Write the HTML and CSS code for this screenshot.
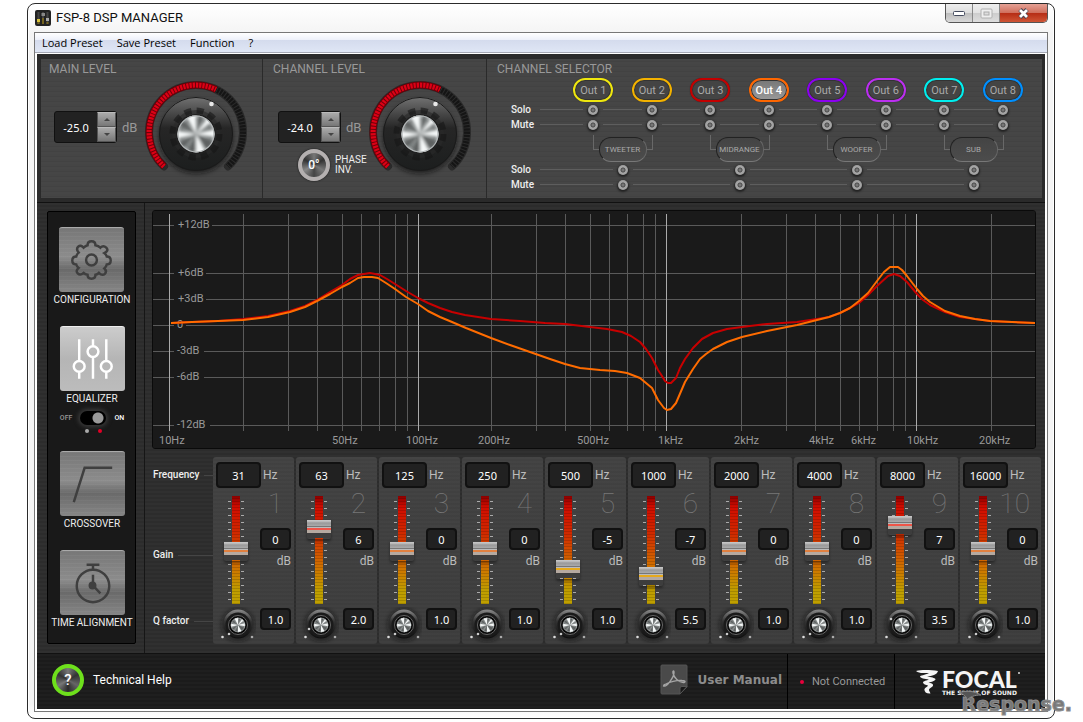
FILE: index.html
```
<!DOCTYPE html>
<html lang="en">
<head>
<meta charset="utf-8">
<meta name="viewport" content="width=device-width, initial-scale=1">
<title>FSP-8 DSP MANAGER</title>
<link rel="stylesheet" href="styles.css">
</head>
<body>
<svg class="defs" width="0" height="0" aria-hidden="true">
  <defs>
    <radialGradient id="capBase"><stop offset="0" stop-color="#9b9f9f"/><stop offset=".8" stop-color="#7e8282"/><stop offset="1" stop-color="#a4a8a9"/></radialGradient>
    <linearGradient id="bodyShade" x1="0" y1="0" x2="0" y2="1"><stop offset="0" stop-color="#727272"/><stop offset=".2" stop-color="#4c4c4c"/><stop offset=".42" stop-color="#262626"/><stop offset="1" stop-color="#1c1e1e"/></linearGradient>
    <linearGradient id="rimShade" x1="0" y1="0" x2="0" y2="1"><stop offset="0" stop-color="#8a8a8a"/><stop offset=".4" stop-color="#333"/><stop offset="1" stop-color="#0e0e0e"/></linearGradient>
    <filter id="soft" x="-30%" y="-30%" width="160%" height="160%"><feGaussianBlur stdDeviation="2"/></filter>
    <filter id="softCap" x="-30%" y="-30%" width="160%" height="160%"><feGaussianBlur stdDeviation=".8"/></filter>
    <clipPath id="capClip"><circle r="10"/></clipPath>
    <g id="cap">
      <circle r="10" fill="url(#capBase)"/>
      <g clip-path="url(#capClip)">
        <g filter="url(#softCap)">
          <path d="M0 0 0-12-6-11ZM0 0 0 12 6 11ZM0 0 12-3 12 2ZM0 0-12 3-12-2ZM0 0 7-10 9-7Z" fill="#f4f7f7"/>
          <path d="M0 0 11 5 7 10ZM0 0-11-6-9-9ZM0 0-5 11-1 11ZM0 0 2-11 4-11ZM0 0-9 9-11 6Z" fill="#4e5253" opacity=".7"/>
        </g>
      </g>
      <circle r="9.700" fill="none" stroke="#b2b6b7" stroke-width=".6"/>
    </g>
    <g id="bigKnob">
      <path d="M-32 34.400A47 47 0 1 1 32 34.400" fill="none" stroke="#2b2b2b" stroke-width="8" stroke-linecap="round"/>
      <path d="M-32 34.400A47 47 0 1 1 32 34.400" fill="none" stroke="#151515" stroke-width="6" stroke-dasharray="2.200 1"/>
      <path d="M-32 34.400A47 47 0 0 1 20-42.500" fill="none" stroke="#6d0009" stroke-width="7" />
      <path d="M-32 34.400A47 47 0 0 1 20-42.500" fill="none" stroke="#dc0015" stroke-width="5" stroke-dasharray="2.200 1"/>
      <circle cy="5" r="37" fill="#111" opacity=".6" filter="url(#soft)"/>
      <circle cy="2" r="37" fill="url(#bodyShade)"/>
      <circle cy="2" r="36.500" fill="none" stroke="#1a1a1a"/>
      <circle cy="2" r="24" fill="#2a2a2a" opacity=".6"/>
      <circle cy="2" r="23.500" fill="none" stroke="#161616" stroke-width="6" stroke-dasharray="7 5.300" opacity=".6"/>
      <circle cy="2" r="20" fill="#202020"/>
      <use href="#cap" transform="translate(0 2) scale(1.850)"/>
      <circle cx="15.500" cy="-28" r="2.300" fill="#e9e9e9"/>
    </g>
    <g id="smallKnob">
      <circle r="17" fill="#111" opacity=".45" filter="url(#soft)"/>
      <circle cy="-1" r="14.500" fill="url(#rimShade)"/>
      <circle r="12.500" fill="#1a1a1a"/>
      <circle r="9.500" fill="#080808" stroke="#666" stroke-width="1"/>
      <use href="#cap" transform="scale(.720)"/>
      <circle cx="-15.500" cy="12" r="1.300" fill="#ddd"/><circle cx="14" cy="12" r="1.300" fill="#aaa"/>
    </g>
  </defs>
</svg>

<div class="window">
  <header class="titlebar">
    <svg class="app-icon" viewBox="0 0 16 16" aria-hidden="true"><rect width="16" height="16" rx="2" fill="#222"/><path d="M3.500 2v12M8 2v12M12.500 2v12" stroke="#444" stroke-width="2"/><path d="M3.500 10v4M8 8v6M12.500 12v2" stroke="#75631f" stroke-width="2"/><rect x="2" y="9" width="3" height="3" fill="#d8c23c"/><rect x="6.500" y="3" width="3.500" height="3" fill="#888"/><rect x="11" y="8" width="3" height="3" fill="#aaa"/></svg>
    <h1 class="app-title">FSP-8 DSP MANAGER</h1>
    <div class="win-buttons">
      <button class="win-btn" aria-label="Minimize"><svg width="14" height="8" viewBox="0 0 14 8"><rect x="1.500" y="2.500" width="11" height="4" rx="1" fill="#fff" stroke="#444b5e"/></svg></button>
      <button class="win-btn" aria-label="Maximize"><svg width="13" height="11" viewBox="0 0 13 11"><rect x="1" y="1" width="11" height="9" rx="1" fill="#eee" stroke="#b0b0b0"/><rect x="4" y="4" width="5" height="3" fill="#ddd" stroke="#aaa"/></svg></button>
      <button class="win-btn win-close" aria-label="Close"><svg width="13" height="11" viewBox="0 0 13 11"><path d="M3 1.500 10 9.500M10 1.500 3 9.500" stroke="#4b4552" stroke-width="4.500"/><path d="M3 2 10 9M10 2 3 9" stroke="#fff" stroke-width="2.800"/></svg></button>
    </div>
  </header>

  <div class="frame">
    <nav class="menu">
      <button>Load Preset</button><button>Save Preset</button><button>Function</button><button>?</button>
    </nav>

    <main class="console">
      <div class="top">
        <section class="panel level">
          <h2 class="panel-title">MAIN LEVEL</h2>
          <div class="level-row">
            <div class="level-left">
              <div class="spin-row">
                <div class="spinner"><input type="text" value="-25.0" aria-label="Main level"><button aria-label="Increase main level"><i class="tri up"></i></button><button aria-label="Decrease main level"><i class="tri down"></i></button></div>
                <span>dB</span>
              </div>
            </div>
            <svg class="knob" viewBox="-52 -52 104 104" role="img" aria-label="Main level knob"><use href="#bigKnob"/></svg>
          </div>
        </section>

        <section class="panel level channel">
          <h2 class="panel-title">CHANNEL LEVEL</h2>
          <div class="level-row">
            <div class="level-left">
              <div class="spin-row">
                <div class="spinner"><input type="text" value="-24.0" aria-label="Channel level"><button aria-label="Increase channel level"><i class="tri up"></i></button><button aria-label="Decrease channel level"><i class="tri down"></i></button></div>
                <span>dB</span>
              </div>
              <div class="phase"><button class="round" id="phase">0°</button><label for="phase">PHASE<br>INV.</label></div>
            </div>
            <svg class="knob" viewBox="-52 -52 104 104" role="img" aria-label="Channel level knob"><use href="#bigKnob"/></svg>
          </div>
        </section>

        <section class="panel selector">
          <h2 class="panel-title">CHANNEL SELECTOR</h2>
          <div class="matrix">
            <div class="outs">
              <button class="out c1">Out 1</button><button class="out c2">Out 2</button><button class="out c3">Out 3</button><button class="out c4 active">Out 4</button><button class="out c5">Out 5</button><button class="out c6">Out 6</button><button class="out c7">Out 7</button><button class="out c8">Out 8</button>
            </div>
            <div class="switches"><span class="lead">Solo</span><div class="cells">
              <span class="cell"><input type="checkbox" aria-label="Solo Out 1"></span><span class="cell"><input type="checkbox" aria-label="Solo Out 2"></span><span class="cell"><input type="checkbox" aria-label="Solo Out 3"></span><span class="cell"><input type="checkbox" aria-label="Solo Out 4"></span><span class="cell"><input type="checkbox" aria-label="Solo Out 5"></span><span class="cell"><input type="checkbox" aria-label="Solo Out 6"></span><span class="cell"><input type="checkbox" aria-label="Solo Out 7"></span><span class="cell"><input type="checkbox" aria-label="Solo Out 8"></span>
            </div></div>
            <div class="switches"><span class="lead">Mute</span><div class="cells">
              <span class="cell"><input type="checkbox" aria-label="Mute Out 1"></span><span class="cell"><input type="checkbox" aria-label="Mute Out 2"></span><span class="cell"><input type="checkbox" aria-label="Mute Out 3"></span><span class="cell"><input type="checkbox" aria-label="Mute Out 4"></span><span class="cell"><input type="checkbox" aria-label="Mute Out 5"></span><span class="cell"><input type="checkbox" aria-label="Mute Out 6"></span><span class="cell"><input type="checkbox" aria-label="Mute Out 7"></span><span class="cell"><input type="checkbox" aria-label="Mute Out 8"></span>
            </div></div>
            <div class="groups">
              <div class="group"><button>TWEETER</button></div><div class="group"><button>MIDRANGE</button></div><div class="group"><button>WOOFER</button></div><div class="group"><button>SUB</button></div>
            </div>
            <div class="switches"><span class="lead">Solo</span><div class="cells four">
              <span class="cell"><input type="checkbox" aria-label="Solo tweeter"></span><span class="cell"><input type="checkbox" aria-label="Solo midrange"></span><span class="cell"><input type="checkbox" aria-label="Solo woofer"></span><span class="cell"><input type="checkbox" aria-label="Solo sub"></span>
            </div></div>
            <div class="switches"><span class="lead">Mute</span><div class="cells four">
              <span class="cell"><input type="checkbox" aria-label="Mute tweeter"></span><span class="cell"><input type="checkbox" aria-label="Mute midrange"></span><span class="cell"><input type="checkbox" aria-label="Mute woofer"></span><span class="cell"><input type="checkbox" aria-label="Mute sub"></span>
            </div></div>
          </div>
        </section>
      </div>

      <div class="middle">
        <aside class="side">
          <nav class="modes">
            <div class="mode"><button class="tile" aria-labelledby="m1"><svg viewBox="0 0 66 66"><path d="M29 17.500 Q29 13.500 33 13.500 T37 17.500 Q40 18 42 20 Q45 17 48 20 T46 25.500 Q48 27 48.500 29 Q52.500 29 52.500 33 T48.500 37 Q48 39.500 46 41 Q49 44 46.500 46.500 T40.500 45.500 Q39 47 37 47.500 Q37 51.500 33 51.500 T29 47.500 Q26.500 47 25 45.500 Q21.500 48.500 19 46 T20 40.500 Q18 39 17.500 37 Q13.500 37 13.500 33 T17.500 29 Q18 26.500 20 25 Q17 21.500 19.500 19 T25 20 Q27 18 29 17.500Z"/><circle cx="33" cy="32.500" r="5.500"/></svg></button><span id="m1">CONFIGURATION</span></div>
            <div class="mode"><button class="tile on" aria-labelledby="m2"><svg viewBox="0 0 66 66"><path d="M19.500 12.500v22M19.500 46v6.500M33.500 12.500v7M33.500 31v21.500M47 12.500v22M47 46v6.500"/><circle cx="19.500" cy="40" r="5.500"/><circle cx="33.500" cy="25" r="5.500"/><circle cx="47" cy="40" r="5.500"/></svg></button><span id="m2">EQUALIZER</span>
              <label class="toggle"><span class="off">OFF</span><span class="track"><input type="checkbox" checked aria-label="Equalizer on"><span class="leds"><i></i><i class="red"></i></span></span><span class="lit">ON</span></label></div>
            <div class="mode"><button class="tile" aria-labelledby="m3"><svg viewBox="0 0 66 66"><path d="M14 51 25 16H53"/></svg></button><span id="m3">CROSSOVER</span></div>
            <div class="mode"><button class="tile" aria-labelledby="m4"><svg viewBox="0 0 66 66"><circle cx="33.500" cy="35.500" r="16.500"/><path d="M27 14h13M33.500 14v5M33.500 24v11L41 43"/><circle class="dot" cx="33" cy="35" r="4"/></svg></button><span id="m4">TIME ALIGNMENT</span></div>
          </nav>
        </aside>

        <div class="work">
          <svg class="graph" viewBox="153 211 882 237" role="img" aria-label="Equalizer response">
            <path class="grid" d="M153 225.500H1035M153 273.500H1035M153 299.500H1035M153 325.500H1035M153 351.500H1035M153 377.500H1035M153 425.500H1035M243.500 214V431M288.500 214V431M317.500 214V431M342.500 214V431M361.500 214V431M379.500 214V431M395.500 214V431M407.500 214V431M491.500 214V431M536.500 214V431M565.500 214V431M590.500 214V431M609.500 214V431M627.500 214V431M643.500 214V431M655.500 214V431M741.500 214V431M786.500 214V431M815.500 214V431M840.500 214V431M859.500 214V431M877.500 214V431M893.500 214V431M905.500 214V431M991.500 214V431"/>
            <g class="mask"><path d="M174 220h38v10h-38zM174 268h32v10h-32zM174 294h32v10h-32zM174 320h12v10h-12zM174 346h30v10h-30zM174 372h30v10h-30zM174 420h36v10h-36z"/></g>
            <path class="decade" d="M169.500 214V431M418.500 214V431M666.500 214V431M916.500 214V431"/>
            <g class="scale">
              <text x="178" y="228">+12dB</text><text x="178" y="276">+6dB</text><text x="178" y="302">+3dB</text><text x="177" y="328">0</text><text x="177" y="354">-3dB</text><text x="177" y="380">-6dB</text><text x="177" y="428">-12dB</text>
              <text x="159" y="444">10Hz</text><text x="332" y="444">50Hz</text><text x="406" y="444">100Hz</text><text x="478" y="444">200Hz</text><text x="577" y="444">500Hz</text><text x="658" y="444">1kHz</text><text x="734" y="444">2kHz</text><text x="809" y="444">4kHz</text><text x="851" y="444">6kHz</text><text x="907" y="444">10kHz</text><text x="979" y="444">20kHz</text>
            </g>
            <polyline class="curve red" points="171,323 192,322 218,321 243,319 268,316 290,311 305,306 317,300 330,292 342,285 350,279 358,275 364,274 370,273 375,274 380,275 387,279 395,284 406,291 418,298 428,303 440,308 452,312 465,315 491,319 520,321 545,323 565,324 590,327 607,329 622,332 631,336 640,342 646,349 652,358 658,370 662,376 665,381 668,383 671,383 676,378 680,368 685,359 693,348 702,339 713,333 727,329 742,327 767,324 797,322 817,319 829,317 840,313 850,308 859,303 868,295 877,286 888,276 894,274 900,276 907,282 917,294 923,300 930,305 945,312 960,317 975,319 990,321 1012,322 1035,323"/>
            <polyline class="curve orange" points="171,323 192,322 218,321 243,320 268,317 290,312 305,307 317,301 330,294 342,287 350,283 358,278 364,277 372,277 378,278 386,283 395,289 406,297 418,304 428,311 440,317 452,322 466,328 491,338 510,345 530,352 550,359 565,364 580,368 600,370 615,371 627,373 640,378 646,383 652,388 658,400 664,408 667,410 671,409 676,403 685,382 693,369 700,359 706,354 713,349 727,342 742,337 767,331 797,325 817,320 829,317 840,313 850,308 859,301 868,293 877,281 884,272 890,267 898,267 902,270 907,276 917,289 923,296 930,302 945,311 960,316 975,319 990,321 1012,322 1035,323"/>
          </svg>

          <div class="eq">
            <div class="legend"><span>Frequency</span><span>Gain</span><span>Q factor</span></div>
            <div class="bands">
              <section class="band"><div class="freq"><input type="text" value="31" aria-label="Band 1 frequency"><span>Hz</span></div><input class="fader" type="range" min="-12" max="12" value="0" aria-label="Band 1 gain"><div class="vals"><b>1</b><input type="text" value="0" aria-label="Band 1 gain value"><span>dB</span></div><svg class="q" viewBox="-22 -18 40 36" aria-hidden="true"><use href="#smallKnob"/><circle cx="-9" cy="9" r="1.300" fill="#ccc"/></svg><input class="qval" type="text" value="1.0" aria-label="Band 1 Q factor"></section>
              <section class="band high"><div class="freq"><input type="text" value="63" aria-label="Band 2 frequency"><span>Hz</span></div><input class="fader" type="range" min="-12" max="12" value="6" aria-label="Band 2 gain"><div class="vals"><b>2</b><input type="text" value="6" aria-label="Band 2 gain value"><span>dB</span></div><svg class="q" viewBox="-22 -18 40 36" aria-hidden="true"><use href="#smallKnob"/><circle cx="-12" cy="4" r="1.300" fill="#ccc"/></svg><input class="qval" type="text" value="2.0" aria-label="Band 2 Q factor"></section>
              <section class="band"><div class="freq"><input type="text" value="125" aria-label="Band 3 frequency"><span>Hz</span></div><input class="fader" type="range" min="-12" max="12" value="0" aria-label="Band 3 gain"><div class="vals"><b>3</b><input type="text" value="0" aria-label="Band 3 gain value"><span>dB</span></div><svg class="q" viewBox="-22 -18 40 36" aria-hidden="true"><use href="#smallKnob"/><circle cx="-9" cy="9" r="1.300" fill="#ccc"/></svg><input class="qval" type="text" value="1.0" aria-label="Band 3 Q factor"></section>
              <section class="band"><div class="freq"><input type="text" value="250" aria-label="Band 4 frequency"><span>Hz</span></div><input class="fader" type="range" min="-12" max="12" value="0" aria-label="Band 4 gain"><div class="vals"><b>4</b><input type="text" value="0" aria-label="Band 4 gain value"><span>dB</span></div><svg class="q" viewBox="-22 -18 40 36" aria-hidden="true"><use href="#smallKnob"/><circle cx="-9" cy="9" r="1.300" fill="#ccc"/></svg><input class="qval" type="text" value="1.0" aria-label="Band 4 Q factor"></section>
              <section class="band low"><div class="freq"><input type="text" value="500" aria-label="Band 5 frequency"><span>Hz</span></div><input class="fader" type="range" min="-12" max="12" value="-5" aria-label="Band 5 gain"><div class="vals"><b>5</b><input type="text" value="-5" aria-label="Band 5 gain value"><span>dB</span></div><svg class="q" viewBox="-22 -18 40 36" aria-hidden="true"><use href="#smallKnob"/><circle cx="-9" cy="9" r="1.300" fill="#ccc"/></svg><input class="qval" type="text" value="1.0" aria-label="Band 5 Q factor"></section>
              <section class="band low"><div class="freq"><input type="text" value="1000" aria-label="Band 6 frequency"><span>Hz</span></div><input class="fader" type="range" min="-12" max="12" value="-7" aria-label="Band 6 gain"><div class="vals"><b>6</b><input type="text" value="-7" aria-label="Band 6 gain value"><span>dB</span></div><svg class="q" viewBox="-22 -18 40 36" aria-hidden="true"><use href="#smallKnob"/></svg><input class="qval" type="text" value="5.5" aria-label="Band 6 Q factor"></section>
              <section class="band"><div class="freq"><input type="text" value="2000" aria-label="Band 7 frequency"><span>Hz</span></div><input class="fader" type="range" min="-12" max="12" value="0" aria-label="Band 7 gain"><div class="vals"><b>7</b><input type="text" value="0" aria-label="Band 7 gain value"><span>dB</span></div><svg class="q" viewBox="-22 -18 40 36" aria-hidden="true"><use href="#smallKnob"/><circle cx="-9" cy="9" r="1.300" fill="#ccc"/></svg><input class="qval" type="text" value="1.0" aria-label="Band 7 Q factor"></section>
              <section class="band"><div class="freq"><input type="text" value="4000" aria-label="Band 8 frequency"><span>Hz</span></div><input class="fader" type="range" min="-12" max="12" value="0" aria-label="Band 8 gain"><div class="vals"><b>8</b><input type="text" value="0" aria-label="Band 8 gain value"><span>dB</span></div><svg class="q" viewBox="-22 -18 40 36" aria-hidden="true"><use href="#smallKnob"/><circle cx="-9" cy="9" r="1.300" fill="#ccc"/></svg><input class="qval" type="text" value="1.0" aria-label="Band 8 Q factor"></section>
              <section class="band high"><div class="freq"><input type="text" value="8000" aria-label="Band 9 frequency"><span>Hz</span></div><input class="fader" type="range" min="-12" max="12" value="7" aria-label="Band 9 gain"><div class="vals"><b>9</b><input type="text" value="7" aria-label="Band 9 gain value"><span>dB</span></div><svg class="q" viewBox="-22 -18 40 36" aria-hidden="true"><use href="#smallKnob"/><circle cx="-11" cy="-6" r="1.300" fill="#ccc"/></svg><input class="qval" type="text" value="3.5" aria-label="Band 9 Q factor"></section>
              <section class="band"><div class="freq"><input type="text" value="16000" aria-label="Band 10 frequency"><span>Hz</span></div><input class="fader" type="range" min="-12" max="12" value="0" aria-label="Band 10 gain"><div class="vals"><b>10</b><input type="text" value="0" aria-label="Band 10 gain value"><span>dB</span></div><svg class="q" viewBox="-22 -18 40 36" aria-hidden="true"><use href="#smallKnob"/><circle cx="-9" cy="9" r="1.300" fill="#ccc"/></svg><input class="qval" type="text" value="1.0" aria-label="Band 10 Q factor"></section>
            </div>
          </div>
        </div>
      </div>

      <footer class="foot">
        <a class="help" href="#help"><span class="help-mark">?</span>Technical Help</a>
        <a class="manual" href="#manual"><svg width="28" height="32" viewBox="0 0 28 32" aria-hidden="true"><path d="M2 1H26a1 1 0 0 1 1 1V23l-7 7H2a1 1 0 0 1-1-1V2a1 1 0 0 1 1-1Z" fill="#4a4a4a" stroke="#555"/><path d="M27 22.500 20 30V24q0-1.500 2-1.500Z" fill="#181818" stroke="#555"/><path d="M4 22C7 23 14 13 14 8.500 14 6 12.500 6.500 13 9c1 5 6 10 11 9.500 2-.5 1-2-2-2-5-.5-13 1.500-17 4-2 1-1.500 2-1 1.500Z" fill="none" stroke="#a5a5a5" stroke-width="1.400"/></svg>User Manual</a>
        <div class="status"><i></i>Not Connected</div>
        <div class="brand">
          <svg width="22" height="24" viewBox="0 0 22 24" aria-hidden="true"><path d="M0 1C6-.5 15 0 22 1 21 5 16 6 11 6.500 15 7 19 8 19.500 9c0 2-4 3-7 3.500 3 .5 5 1.500 4.500 3-.5 2-4 2.500-4 4.500 0 1 1 2 1.500 3.500C10 24 8 21 8.500 19c.5-1.500 3-2 3.500-3.500C10 15 7 14 7 12.500c0-1.500 4-2 6-3C9 9 4 8 4 6.500 4 5.500 9 5 13 3 9 2.500 3 4 0 1Z" fill="#f4f4f4"/></svg>
          <div class="brand-text"><strong>FOCAL<i></i></strong><small>THE SPIRIT OF SOUND</small></div>
        </div>
      </footer>
    </main>
  </div>
  <div class="watermark" aria-hidden="true"><svg width="24" height="12" viewBox="0 0 24 12"><path d="M1 3C7 0 17 1 23 5 16 5 12 7 9 10 9 7 6 4 1 3Z" fill="#555" stroke="#888"/></svg>Response.</div>
</div>
</body>
</html>
```
FILE: styles.css
```
* { box-sizing: border-box; }
body { margin: 0; padding: 3px 28px 4px 27px; background: #fff; font-family: Roboto, "Liberation Sans", sans-serif; font-size: 11px; color: #ddd; }
button, input { font: inherit; color: inherit; margin: 0; padding: 0; border: 0; background: none; }
a { color: inherit; text-decoration: none; }
h1, h2 { margin: 0; font-weight: 400; }
.defs { position: absolute; }

.window { position: relative; border: 1px solid #2b2b2b; border-radius: 8px; background: linear-gradient(#fff, #f4f4f4 30px, #f4f4f4 98%, #fff); padding: 0 6px 6px; box-shadow: inset 0 0 0 1px #fff; }
.titlebar { display: flex; height: 28px; align-items: center; padding-left: 1px; }
.app-icon { width: 16px; height: 16px; margin-right: 5px; }
.app-title { font-size: 13px; line-height: 28px; color: #111; }
.win-buttons { display: flex; align-self: flex-start; margin-left: auto; border: 1px solid #555; border-top: 0; border-radius: 0 0 5px 5px; overflow: hidden; }
.win-btn { display: grid; place-items: center; width: 27px; height: 18px; border-right: 1px solid #888; background: linear-gradient(#eee, #dcdcdc 50%, #bdbdbd 50%, #d8d8d8); }
.win-btn + .win-btn { background: linear-gradient(#eee, #e2e2e2 50%, #ccc 50%, #ddd); }
.win-btn.win-close { width: 47px; border-right: 0; background: linear-gradient(#e5a195, #d0705e 48%, #b52c14 50%, #cf5535); }

.frame { border: 1px solid #777; background: #fff; padding-bottom: 2px; }
.menu { display: flex; gap: 14px; height: 20px; padding: 0 7px; background: linear-gradient(#fff, #eef1fa 35%, #d4dbed 36%, #dfe6f5); border-bottom: 1px solid #a5a9b5; font: 11px/20px "Open Sans", "Noto Sans", sans-serif; color: #000; }
.menu button { line-height: 20px; }

.console { margin: 1px 2px 0; background: #2a2a2a; }
.top { display: grid; grid-template-columns: 222px 224px 1fr; padding: 5px 3px 4px 4px; border-bottom: 1px solid #111; }
.panel { height: 139px; padding: 3px 9px 0 8px; border-right: 1px solid #2a2a2a; background: repeating-linear-gradient(#454545 0 2px, #424242 2px 3px, #464646 3px 5px); }
.panel.channel { padding-left: 10px; }
.panel.selector { padding-left: 10px; border-right: 0; padding-right: 10px; }
.panel-title { font-size: 12px; line-height: 15px; color: #999; }
.level-row { display: flex; justify-content: space-between; margin-top: 3px; padding-left: 5px; }
.knob { width: 104px; height: 104px; margin-right: 5px; }
.spin-row { display: flex; align-items: center; gap: 5px; margin-top: 31px; font-size: 13px; color: #999; }
.spinner { display: grid; grid-template: 15px 15px / 42px 19px; border: 1px solid #111; border-radius: 3px; background: #222; }
.spinner input { grid-row: 1 / 3; width: 42px; text-align: center; color: #fff; font: 11px "Noto Sans", sans-serif; }
.spinner button { display: grid; place-items: center; background: linear-gradient(#aaa, #777); border: 1px solid #555; border-top-color: #bbb; }
.tri { border: 3px solid transparent; }
.tri.up { border-top: 0; border-bottom: 3px solid #444; }
.tri.down { border-bottom: 0; border-top: 3px solid #444; }
.phase { display: flex; align-items: center; gap: 5px; margin: 6px 0 0 20px; font-size: 10px; line-height: 10px; color: #eee; }
.round { width: 32px; height: 32px; border: 4px solid #b4b0b0; border-radius: 50%; background: conic-gradient(#777, #333, #777, #444, #888, #333, #777); box-shadow: 0 0 2px #111; font-size: 12px; color: #fff; font-weight: 500; }

.outs { display: grid; grid-template-columns: repeat(8, 1fr); justify-items: center; margin: 1px 0 0 67px; }
.out { width: 40px; height: 24px; border: 2px solid; border-radius: 12px; font-size: 11px; background: #444; box-shadow: inset 0 0 0 1px #333, 0 0 1px #222; -webkit-text-fill-color: #aaa; }
.out.active { background: linear-gradient(#777, #999); font-weight: 500; -webkit-text-fill-color: #fff; }
.c1 { border-color: #efe70f; } .c2 { border-color: #f3b200; } .c3 { border-color: #c40000; } .c4 { border-color: #ff6600; }
.c5 { border-color: #8b00f0; } .c6 { border-color: #bb2ff0; } .c7 { border-color: #0ee; } .c8 { border-color: #0090ff; }
.switches { display: flex; align-items: center; height: 15px; padding-left: 14px; }
.lead { display: flex; align-items: center; flex: 0 0 53px; color: #eee; font-size: 10px; font-weight: 500; }
.lead::after { content: ""; height: 1px; background: #5e5e5e; margin-left: auto; width: 24px; }
.cells { display: grid; grid-template-columns: repeat(8, 1fr); flex: 1; }
.cells.four { grid-template-columns: repeat(4, 1fr); }
.cell { display: flex; align-items: center; gap: 5px; }
.cell::before, .cell::after { content: ""; flex: 1; height: 1px; background: #5e5e5e; }
.cell:last-child::after { background: none; }
.cell input { appearance: none; width: 10px; height: 10px; border-radius: 50%; background: radial-gradient(circle, #777 0 1px, #4a4a4a 2px, #aaa 3px, #999 5px); box-shadow: 0 1px 2px 1px #222; }
.groups { display: grid; grid-template-columns: repeat(4, 1fr); margin: 3px 0 0 67px; height: 27px; }
.group { display: flex; justify-content: center; align-items: flex-end; }
.group::before, .group::after { content: ""; width: 5px; height: 14px; align-self: flex-start; border: 0 solid #686868; border-bottom-width: 1px; }
.group::before { border-left-width: 1px; }
.group::after { border-right-width: 1px; }
.group button { width: 48px; height: 25px; border: 1px solid #222; border-bottom-color: #777; border-right-color: #666; border-radius: 12px; font-size: 8px; color: #aaa; background: linear-gradient(#444, #4c4c4c); white-space: nowrap; }

.middle { display: flex; background: repeating-linear-gradient(#303030 0 2px, #2c2c2c 2px 4px); }
.side { flex: 0 0 108px; padding: 8px 8px 9px 10px; border-right: 1px solid #161616; }
.modes { display: flex; flex-direction: column; align-items: center; gap: 19px; height: 433px; padding: 15px 0 0 1px; border: 1px solid #000; border-radius: 2px; background: #191919; }
.mode { display: flex; flex-direction: column; align-items: center; font-size: 10px; line-height: 15px; color: #eee; white-space: nowrap; }
.tile { width: 65px; height: 65px; border-radius: 3px; background: repeating-linear-gradient(rgba(255,255,255,.04) 0 1px, transparent 1px 4px), linear-gradient(#777, #8c8c8c 45%, #6a6a6a 65%, #868686); border-top: 1px solid #aaa; }
.tile svg { display: block; width: 65px; height: 65px; fill: none; stroke: #3f3f3f; stroke-width: 2.5px; }
.tile .dot { fill: #3f3f3f; stroke: none; }
.tile.on { background: linear-gradient(#ccc, #b5b5b5 50%, #bcbcbc); border-top-color: #eee; }
.tile.on svg { stroke: #fff; }
.toggle { display: flex; align-items: flex-start; gap: 4px; height: 26px; padding-top: 5px; font-size: 7px; line-height: 14px; font-weight: 500; }
.toggle .off { color: #999; }
.toggle .lit { color: #fff; }
.track { display: flex; flex-direction: column; align-items: center; width: 34px; }
.track input { appearance: none; width: 26px; height: 14px; border-radius: 7px; background: radial-gradient(circle at 18px 7px, #999 0 5px, transparent 6px), #000; box-shadow: 0 0 4px 2px #3a3a3a; }
.leds { display: flex; gap: 9px; margin-top: 4px; }
.leds i { width: 4px; height: 4px; border-radius: 50%; background: #aaa; }
.leds .red { background: #e30026; }

.work { flex: 1; min-width: 0; padding: 8px 4px 8px 8px; }
.graph { display: block; width: calc(100% - 6px); background: #1a1a1a; outline: 1px solid #0a0a0a; border-radius: 2px; }
.grid { stroke: #5a5a5a; }
.mask { fill: #1a1a1a; }
.decade { stroke: #aaa; }
.scale { fill: #999; font-size: 11px; }
.curve { fill: none; stroke-width: 2; stroke-linejoin: round; }
.curve.red { stroke: #c80000; }
.curve.orange { stroke: #ff6c00; }
.eq { display: flex; margin-top: 9px; }
.legend { display: flex; flex-direction: column; gap: 66px; flex: 0 0 60px; font-size: 10px; font-weight: 500; color: #eee; line-height: 14px; padding-top: 11px; }
.legend span { display: flex; align-items: center; gap: 5px; white-space: nowrap; }
.legend span:last-child { margin-top: -14px; }
.legend span::after { content: ""; flex: 1; height: 1px; background: #454545; }
.bands { display: grid; grid-template-columns: repeat(10, 1fr); gap: 2px; flex: 1; min-width: 0; }
.band { --mark: #e08040; display: grid; grid-template-columns: 44px 31px; grid-template-rows: 26px 118px 37px; padding: 5px 3px 1px; border-radius: 3px; background: repeating-linear-gradient(rgba(255,255,255,.015) 0 2px, transparent 2px 4px), linear-gradient(#414141, #3c3c3c); }
.band.high { --mark: #ee5548; }
.band.low { --mark: #e6a91c; }
.band input[type="text"] { width: 100%; border: 2px solid #111; border-radius: 4px; background: #212121; color: #fff; text-align: center; font: 11px "Noto Sans", sans-serif; }
.freq { grid-column: 1 / 3; display: grid; grid-template-columns: 45px 1fr; gap: 2px; align-items: center; }
.freq input { height: 26px; }
.freq span, .vals span { font-size: 12px; color: #bbb; }
.fader { appearance: none; writing-mode: vertical-lr; direction: rtl; width: 24px; height: 108px; margin: 8px 0 0 8px;
  background:
    repeating-linear-gradient(transparent 0 5px, #aaa 5px 6px, transparent 6px 7px) 4px 0 / 3px 100% no-repeat,
    repeating-linear-gradient(transparent 0 5px, #aaa 5px 6px, transparent 6px 7px) 17px 0 / 3px 100% no-repeat,
    repeating-linear-gradient(transparent 0 2px, rgba(0,0,0,.15) 2px 3px) 8px 0 / 8px 100% no-repeat,
    linear-gradient(#8a0000, #d00c00 10%, #d02a00 35%, #d07000 65%, #bf9f00 88%) 8px 0 / 8px 100% no-repeat; }
.fader::-webkit-slider-thumb { appearance: none; width: 24px; height: 21px; border-radius: 2px; background: linear-gradient(transparent 2px, #c4c4c4 2px 3px, #999 5px, #aaa 8px, #777 8px 9px, #bbb 9px 10px, var(--mark) 10px 12px, #b5a9a0 12px 15px, #3d3d3d 15px 20px, transparent 20px); box-shadow: 0 2px 3px rgba(0,0,0,.4); }
.vals { display: flex; flex-direction: column; align-items: flex-end; }
.vals b { font-size: 28px; font-weight: 100; line-height: 30px; color: #777; margin: 1px 8px 9px 0; white-space: nowrap; direction: rtl; }
.vals input { height: 22px; }
.vals span { line-height: 15px; margin-top: 4px; }
.q { width: 40px; height: 36px; margin-top: 1px; }
.band .qval { height: 22px; margin-top: 2px; }

.foot { display: flex; align-items: stretch; height: 56px; border-top: 1px solid #111; background: repeating-linear-gradient(#1f1f1f 0 2px, #1b1b1b 2px 4px); }
.help { display: flex; align-items: center; gap: 9px; padding: 0 0 3px 15px; font-size: 12px; color: #fff; }
.help-mark { display: grid; place-items: center; width: 32px; height: 32px; border: 4px solid #6ee01c; border-radius: 50%; background: conic-gradient(#777, #333, #666, #2a2a2a, #777, #333, #777); font: 500 15px Roboto, sans-serif; }
.manual { display: flex; align-items: center; gap: 10px; margin-left: auto; padding: 0 5px 3px 0; font: bold 12px "DejaVu Sans", sans-serif; color: #8c8c8c; }
.status { display: flex; align-items: center; gap: 8px; width: 108px; padding-left: 12px; border-left: 1px solid #000; border-right: 1px solid #000; color: #999; white-space: nowrap; }
.status i { width: 4px; height: 4px; border-radius: 50%; background: #e8003c; }
.brand { display: flex; align-items: center; gap: 4px; width: 150px; padding-left: 21px; color: #f4f4f4; }
.brand-text { display: flex; flex-direction: column; padding-top: 2px; }
.brand strong { display: flex; font: 900 23px/20px Lato, sans-serif; }
.brand strong i { width: 2px; height: 2px; margin: 3px 0 0 1px; border-radius: 50%; background: #ddd; }
.brand small { font: bold 6px/8px "DejaVu Sans", sans-serif; white-space: nowrap; }
.watermark { position: absolute; right: -18px; bottom: 4px; font: bold 19px/20px "DejaVu Sans", sans-serif; color: #777; -webkit-text-stroke: 1px #8d8d8d; }
.watermark svg { position: absolute; left: -4px; top: -4px; }
```
